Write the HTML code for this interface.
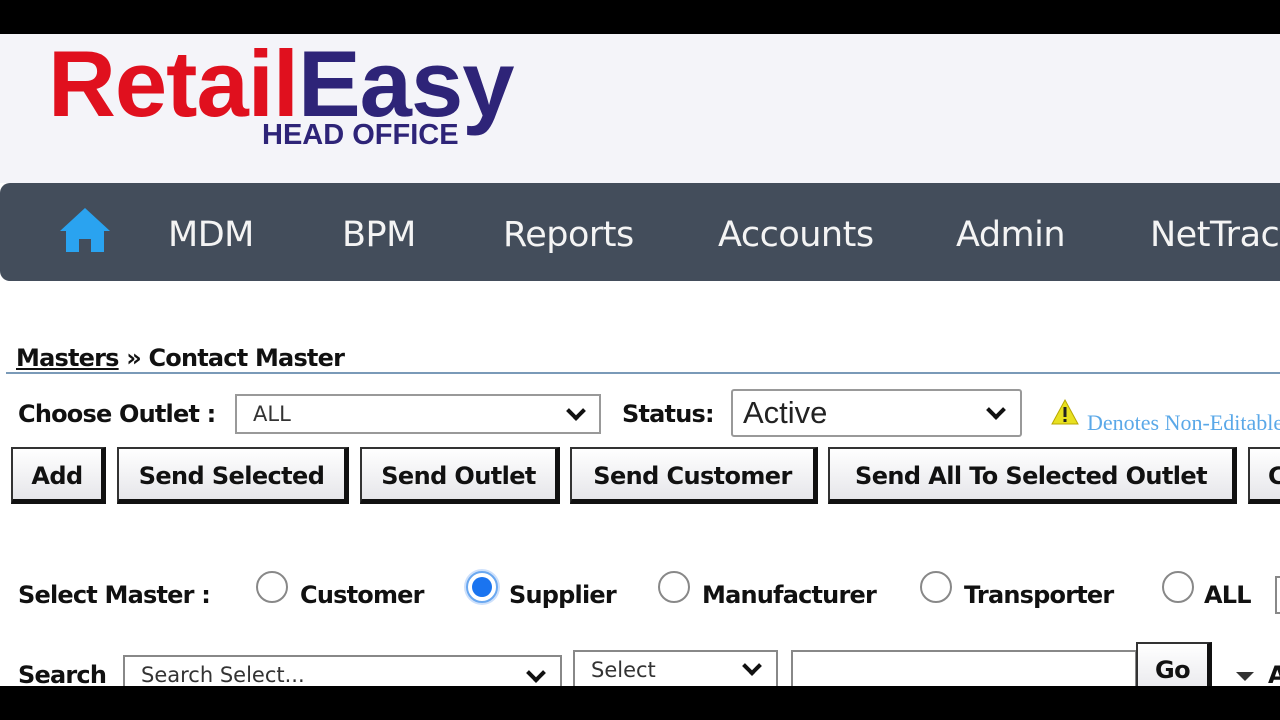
<!DOCTYPE html>
<html><head><meta charset="utf-8"><style>
*{margin:0;padding:0;box-sizing:border-box}
body{width:1280px;height:720px;overflow:hidden;background:#fff;position:relative;font-family:"DejaVu Sans","Liberation Sans",sans-serif;color:#111}
.a{position:absolute;white-space:nowrap}
.hdr{left:0;top:34px;width:1280px;height:149px;background:#f4f4f9}
.nav{left:0;top:183px;width:1300px;height:98px;background:#434d5b;border-radius:10px 0 0 10px}
.nv{color:#f4f4f4;font-size:35px;top:215px;font-family:"DejaVu Sans",sans-serif;letter-spacing:-0.5px}
.lb{font-weight:bold;font-size:24px;letter-spacing:-0.8px}
.btn{top:447px;height:57px;background:linear-gradient(#fff,#e6e6ea);border:2px solid #333;border-right:5px solid #111;border-bottom:5px solid #111;font-weight:bold;font-size:24px;display:flex;align-items:center;justify-content:center;letter-spacing:-0.6px;padding-top:3px}
.sel{border:2px solid #999;background:#fff}
.rad{width:32px;height:32px;border-radius:50%;border:2px solid #888;background:#fff}
.chev{position:absolute;width:14px;height:14px;border-right:4px solid #111;border-bottom:4px solid #111;transform:rotate(45deg)}
</style></head><body>
<div class="a hdr"></div>
<div class="a" style="left:48px;top:30px;font:bold 94px 'Liberation Sans',sans-serif;letter-spacing:-1px"><span style="color:#e0101e">Retail</span><span style="color:#2e2478">Easy</span></div>
<div class="a" style="left:262px;top:119px;font:bold 29px 'Liberation Sans',sans-serif;color:#2e2478;letter-spacing:0px">HEAD OFFICE</div>
<div class="a nav"></div>
<svg class="a" style="left:58px;top:206px" width="54" height="48" viewBox="0 0 54 48"><path d="M27 2 L52 25 L46 25 L46 46 L33 46 L33 33 L21 33 L21 46 L8 46 L8 25 L2 25 Z" fill="#2aa3f0"/></svg>
<div class="a nv" style="left:168px">MDM</div>
<div class="a nv" style="left:342px">BPM</div>
<div class="a nv" style="left:503px">Reports</div>
<div class="a nv" style="left:718px">Accounts</div>
<div class="a nv" style="left:956px">Admin</div>
<div class="a nv" style="left:1150px">NetTrac</div>
<div class="a lb" style="left:16px;top:344px"><span style="text-decoration:underline">Masters</span> » Contact Master</div>
<div class="a" style="left:6px;top:372px;width:1274px;height:2px;background:#7a9ab8"></div>
<div class="a lb" style="left:18px;top:400px">Choose Outlet :</div>
<div class="a sel" style="left:235px;top:394px;width:366px;height:40px"><span class="a" style="left:16px;top:6px;font-size:21px;color:#333">ALL</span><span class="chev" style="left:332px;top:8px"></span></div>
<div class="a lb" style="left:622px;top:400px">Status:</div>
<div class="a sel" style="left:731px;top:389px;width:291px;height:48px;border-radius:3px"><span class="a" style="left:10px;top:4px;font:31px 'Liberation Sans',sans-serif;color:#222">Active</span><span class="chev" style="left:256px;top:12px"></span></div>
<svg class="a" style="left:1050px;top:398px" width="30" height="28" viewBox="0 0 30 28"><path d="M15 2 L28 26 L2 26 Z" fill="#e8e020" stroke="#b8a800"/><rect x="13.5" y="9" width="3" height="10" fill="#222"/><rect x="13.5" y="21" width="3" height="3" fill="#222"/></svg>
<div class="a" style="left:1087px;top:410px;font:22px 'Liberation Serif',serif;color:#5aa8e8">Denotes Non-Editable</div>
<div class="a btn" style="left:11px;width:95px">Add</div>
<div class="a btn" style="left:117px;width:232px">Send Selected</div>
<div class="a btn" style="left:360px;width:200px">Send Outlet</div>
<div class="a btn" style="left:570px;width:248px">Send Customer</div>
<div class="a btn" style="left:828px;width:409px">Send All To Selected Outlet</div>
<div class="a btn" style="left:1248px;width:60px;justify-content:flex-start;padding-left:18px">C</div>
<div class="a lb" style="left:18px;top:581px">Select Master :</div>
<div class="a rad" style="left:256px;top:571px"></div>
<div class="a lb" style="left:300px;top:581px">Customer</div>
<div class="a rad" style="left:466px;top:571px;border-color:#6aa8f0;box-shadow:0 0 0 2px #cde0fb"><div style="margin:4px;width:20px;height:20px;border-radius:50%;background:#1a74f0"></div></div>
<div class="a lb" style="left:509px;top:581px">Supplier</div>
<div class="a rad" style="left:658px;top:571px"></div>
<div class="a lb" style="left:702px;top:581px">Manufacturer</div>
<div class="a rad" style="left:920px;top:571px"></div>
<div class="a lb" style="left:964px;top:581px">Transporter</div>
<div class="a rad" style="left:1162px;top:571px"></div>
<div class="a lb" style="left:1204px;top:581px">ALL</div>
<div class="a" style="left:1275px;top:576px;width:10px;height:38px;border:2px solid #888"></div>
<div class="a lb" style="left:18px;top:661px">Search</div>
<div class="a sel" style="left:123px;top:655px;width:439px;height:45px;border-color:#888"><span class="a" style="left:16px;top:6px;font-size:21px;color:#333">Search Select...</span><span class="chev" style="left:404px;top:9px"></span></div>
<div class="a sel" style="left:573px;top:650px;width:205px;height:45px;border-color:#888"><span class="a" style="left:16px;top:6px;font-size:21px;color:#333">Select</span><span class="chev" style="left:170px;top:7px"></span></div>
<div class="a sel" style="left:791px;top:650px;width:346px;height:45px;border-color:#888"></div>
<div class="a btn" style="left:1136px;top:642px;width:76px;height:60px;align-items:flex-start;padding-top:12px">Go</div>
<div class="a" style="left:1236px;top:672px;width:0;height:0;border-left:9px solid transparent;border-right:9px solid transparent;border-top:9px solid #333"></div>
<div class="a lb" style="left:1268px;top:661px">A</div>
<div class="a" style="left:0;top:0;width:1280px;height:34px;background:#000"></div>
<div class="a" style="left:0;top:686px;width:1280px;height:34px;background:#000"></div>
</body></html>
